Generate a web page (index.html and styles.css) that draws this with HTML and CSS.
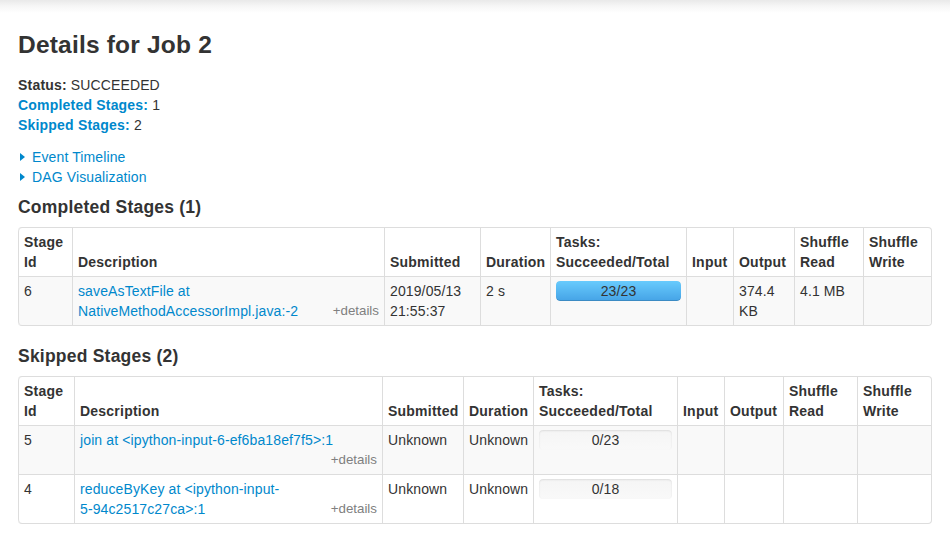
FILE: index.html
```html
<!DOCTYPE html>
<html lang="en">
<head>
<meta charset="utf-8">
<title>Details for Job 2</title>
<link rel="stylesheet" href="styles.css">
</head>
<body>
<div class="page">
  <h3 class="title">Details for Job 2</h3>
  <ul class="summary">
    <li><strong>Status:</strong> SUCCEEDED</li>
    <li><a href="#completed"><strong>Completed Stages:</strong></a> 1</li>
    <li><a href="#skipped"><strong>Skipped Stages:</strong></a> 2</li>
  </ul>
  <div class="expanders">
    <div class="expander"><span class="arrow"></span><a href="#">Event Timeline</a></div>
    <div class="expander"><span class="arrow"></span><a href="#">DAG Visualization</a></div>
  </div>

  <h4 id="completed">Completed Stages (1)</h4>
  <table class="stages completed">
    <thead>
      <tr>
        <th class="c-id">Stage Id</th>
        <th class="c-desc">Description</th>
        <th class="c-sub">Submitted</th>
        <th class="c-dur">Duration</th>
        <th class="c-tasks">Tasks: Succeeded/Total</th>
        <th class="c-in">Input</th>
        <th class="c-out">Output</th>
        <th class="c-sr">Shuffle Read</th>
        <th class="c-sw">Shuffle Write</th>
      </tr>
    </thead>
    <tbody>
      <tr>
        <td>6</td>
        <td><a href="#">saveAsTextFile at NativeMethodAccessorImpl.java:-2</a> <span class="details">+details</span></td>
        <td>2019/05/13 21:55:37</td>
        <td>2 s</td>
        <td><div class="progress"><div class="bar" style="width:100%"></div><span class="label">23/23</span></div></td>
        <td></td>
        <td>374.4 KB</td>
        <td>4.1 MB</td>
        <td></td>
      </tr>
    </tbody>
  </table>

  <h4 id="skipped">Skipped Stages (2)</h4>
  <table class="stages skipped">
    <thead>
      <tr>
        <th class="c-id">Stage Id</th>
        <th class="c-desc">Description</th>
        <th class="c-sub">Submitted</th>
        <th class="c-dur">Duration</th>
        <th class="c-tasks">Tasks: Succeeded/Total</th>
        <th class="c-in">Input</th>
        <th class="c-out">Output</th>
        <th class="c-sr">Shuffle Read</th>
        <th class="c-sw">Shuffle Write</th>
      </tr>
    </thead>
    <tbody>
      <tr>
        <td>5</td>
        <td><a href="#">join at &lt;ipython-input-6-ef6ba18ef7f5&gt;:1</a> <span class="details">+details</span></td>
        <td>Unknown</td>
        <td>Unknown</td>
        <td><div class="progress"><div class="bar" style="width:0%"></div><span class="label">0/23</span></div></td>
        <td></td>
        <td></td>
        <td></td>
        <td></td>
      </tr>
      <tr>
        <td>4</td>
        <td><a href="#">reduceByKey at &lt;ipython-input-<wbr><span class="nobr">5-94c2517c27ca&gt;:1</span></a> <span class="details">+details</span></td>
        <td>Unknown</td>
        <td>Unknown</td>
        <td><div class="progress"><div class="bar" style="width:0%"></div><span class="label">0/18</span></div></td>
        <td></td>
        <td></td>
        <td></td>
        <td></td>
      </tr>
    </tbody>
  </table>
</div>
</body>
</html>
```

FILE: styles.css
```css
html, body {
  margin: 0;
  padding: 0;
}

body {
  font-family: "Liberation Sans", Arial, Helvetica, sans-serif;
  font-size: 14px;
  line-height: 20px;
  letter-spacing: 0.12px;
  color: #333333;
  background: #ffffff linear-gradient(to bottom, #e9e9e9 0, #f6f6f6 6px, #ffffff 13px) no-repeat;
}

strong {
  letter-spacing: 0.2px;
}

a {
  color: #0088cc;
  text-decoration: none;
}

.nobr {
  white-space: nowrap;
}

.page {
  padding: 25px 18px 0 18px;
}

.title {
  margin: 0;
  font-size: 24.5px;
  line-height: 40px;
  font-weight: bold;
  letter-spacing: 0.2px;
}

.summary {
  list-style: none;
  margin: 10px 0 12px 0;
  padding: 0;
}

.expander {
  display: flex;
  align-items: center;
}

.arrow {
  width: 0;
  height: 0;
  border-top: 4px solid transparent;
  border-bottom: 4px solid transparent;
  border-left: 5px solid #0088cc;
  margin: 0 7px 0 2px;
}

h4 {
  margin: 10px 0;
  font-size: 17.5px;
  line-height: 20px;
  font-weight: bold;
  letter-spacing: 0.22px;
}

.stages {
  width: 100%;
  table-layout: fixed;
  border-collapse: separate;
  border-spacing: 0;
  border: 1px solid #dddddd;
  border-left: 0;
  border-radius: 4px;
  margin-bottom: 20px;
}

.stages:last-child {
  margin-bottom: 0;
}

.stages th,
.stages td {
  box-sizing: border-box;
  padding: 4px 5px;
  border-left: 1px solid #dddddd;
  border-top: 1px solid #dddddd;
  text-align: left;
  vertical-align: top;
  line-height: 20px;
}

.stages thead th {
  border-top: 0;
  vertical-align: bottom;
  font-weight: bold;
  letter-spacing: 0.22px;
}

.stages thead th:first-child {
  border-top-left-radius: 4px;
}

.stages thead th:last-child {
  border-top-right-radius: 4px;
}

.stages tbody tr:last-child td:first-child {
  border-bottom-left-radius: 4px;
}

.stages tbody tr:last-child td:last-child {
  border-bottom-right-radius: 4px;
}

.stages tbody tr:nth-child(odd) td {
  background-color: #f9f9f9;
}

/* column widths: completed stages table */
.completed .c-id { width: 54px; }
.completed .c-desc { width: 312px; }
.completed .c-sub { width: 96px; }
.completed .c-dur { width: 70px; }
.completed .c-tasks { width: 136px; }
.completed .c-in { width: 47px; }
.completed .c-out { width: 61px; }
.completed .c-sr { width: 69px; }

/* column widths: skipped stages table */
.skipped .c-id { width: 56px; }
.skipped .c-desc { width: 308px; }
.skipped .c-sub { width: 81px; }
.skipped .c-dur { width: 70px; }
.skipped .c-tasks { width: 144px; }
.skipped .c-in { width: 47px; }
.skipped .c-out { width: 59px; }
.skipped .c-sr { width: 74px; }

.details {
  float: right;
  font-size: 13.33px;
  color: #808080;
  cursor: pointer;
  letter-spacing: 0;
}

.progress {
  position: relative;
  height: 20px;
  border-radius: 4px;
  background: #f7f7f7 linear-gradient(to bottom, #f5f5f5, #f9f9f9);
  box-shadow: inset 0 1px 2px rgba(0, 0, 0, 0.1);
  overflow: hidden;
  text-align: center;
  line-height: 20px;
  color: #333333;
}

.progress .bar {
  position: absolute;
  left: 0;
  top: 0;
  bottom: 0;
  border-radius: 4px;
  background: #3ec0ff linear-gradient(to bottom, #68cbfd, #45a3e6);
  box-shadow: inset 0 -1px 0 rgba(0, 0, 0, 0.15);
}

.progress .label {
  position: relative;
}
```
